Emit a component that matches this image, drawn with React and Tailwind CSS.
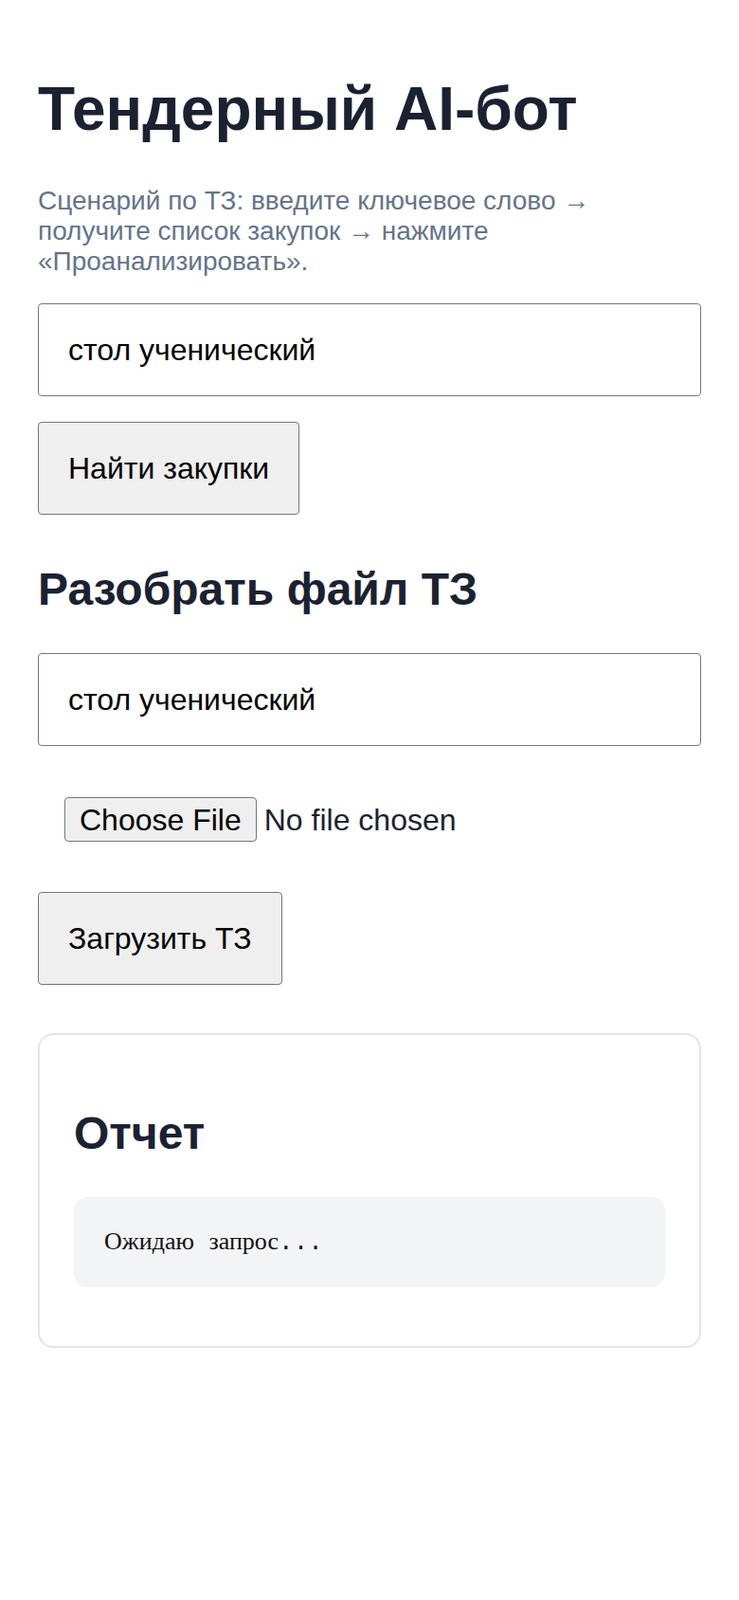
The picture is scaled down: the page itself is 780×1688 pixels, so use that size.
import { useState } from 'react';

export default function App() {
  const [keyword, setKeyword] = useState('стол ученический');
  const [fileKeyword, setFileKeyword] = useState('стол ученический');
  const [fileName, setFileName] = useState('');

  return (
    <div className="min-h-[1688px] bg-white px-[40px] pt-[78px] font-['Liberation_Sans',Arial,sans-serif] text-[#1a2231]">
      <h1 className="text-[64px] leading-[74px] font-bold">Тендерный AI-бот</h1>
      <p className="mt-[44px] text-[28px] leading-[32px] text-[#64748b]">
        Сценарий по ТЗ: введите ключевое слово → получите список закупок → нажмите «Проанализировать».
      </p>

      <input
        type="text"
        value={keyword}
        onChange={(e) => setKeyword(e.target.value)}
        className="mt-[28px] block w-full h-[98px] px-[31px] text-[32px] text-black bg-white border border-[#767676] rounded-[4px] outline-none"
      />
      <button className="mt-[27px] block h-[98px] px-[31px] text-[32px] text-black bg-[#efefef] border border-[#767676] rounded-[4px]">
        Найти закупки
      </button>

      <h2 className="mt-[51px] text-[48px] leading-[55px] font-bold">Разобрать файл ТЗ</h2>
      <input
        type="text"
        value={fileKeyword}
        onChange={(e) => setFileKeyword(e.target.value)}
        className="mt-[40px] block w-full h-[98px] px-[31px] text-[32px] text-black bg-white border border-[#767676] rounded-[4px] outline-none"
      />

      {/* file picker */}
      <label className="mt-[54px] ml-[28px] flex items-center gap-[8px] cursor-pointer">
        <input
          type="file"
          className="hidden"
          onChange={(e) => setFileName(e.target.files?.[0]?.name || '')}
        />
        <span className="flex items-center h-[47px] px-[15px] text-[32px] leading-none text-black bg-[#efefef] border border-[#767676] rounded-[4px]">
          Choose File
        </span>
        <span className="text-[32px] leading-none">{fileName || 'No file chosen'}</span>
      </label>

      <button className="mt-[53px] block h-[98px] px-[31px] text-[32px] text-black bg-[#efefef] border border-[#767676] rounded-[4px]">
        Загрузить ТЗ
      </button>

      <div className="mt-[51px] border-2 border-[#e2e5e9] rounded-[16px] px-[36px] pt-[36px] pb-[36px]">
        <h2 className="mt-[40px] text-[48px] leading-[55px] font-bold">Отчет</h2>
        <pre className="mt-[40px] mb-[26px] bg-[#f3f4f6] rounded-[14px] px-[32px] py-[32px] text-[26px] leading-[30px] text-[#111111] font-['Liberation_Mono',monospace]">
          <span className="font-['Liberation_Serif',serif]">Ожидаю</span> <span className="font-['Liberation_Serif',serif]">запрос</span>...
        </pre>
      </div>
    </div>
  );
}
